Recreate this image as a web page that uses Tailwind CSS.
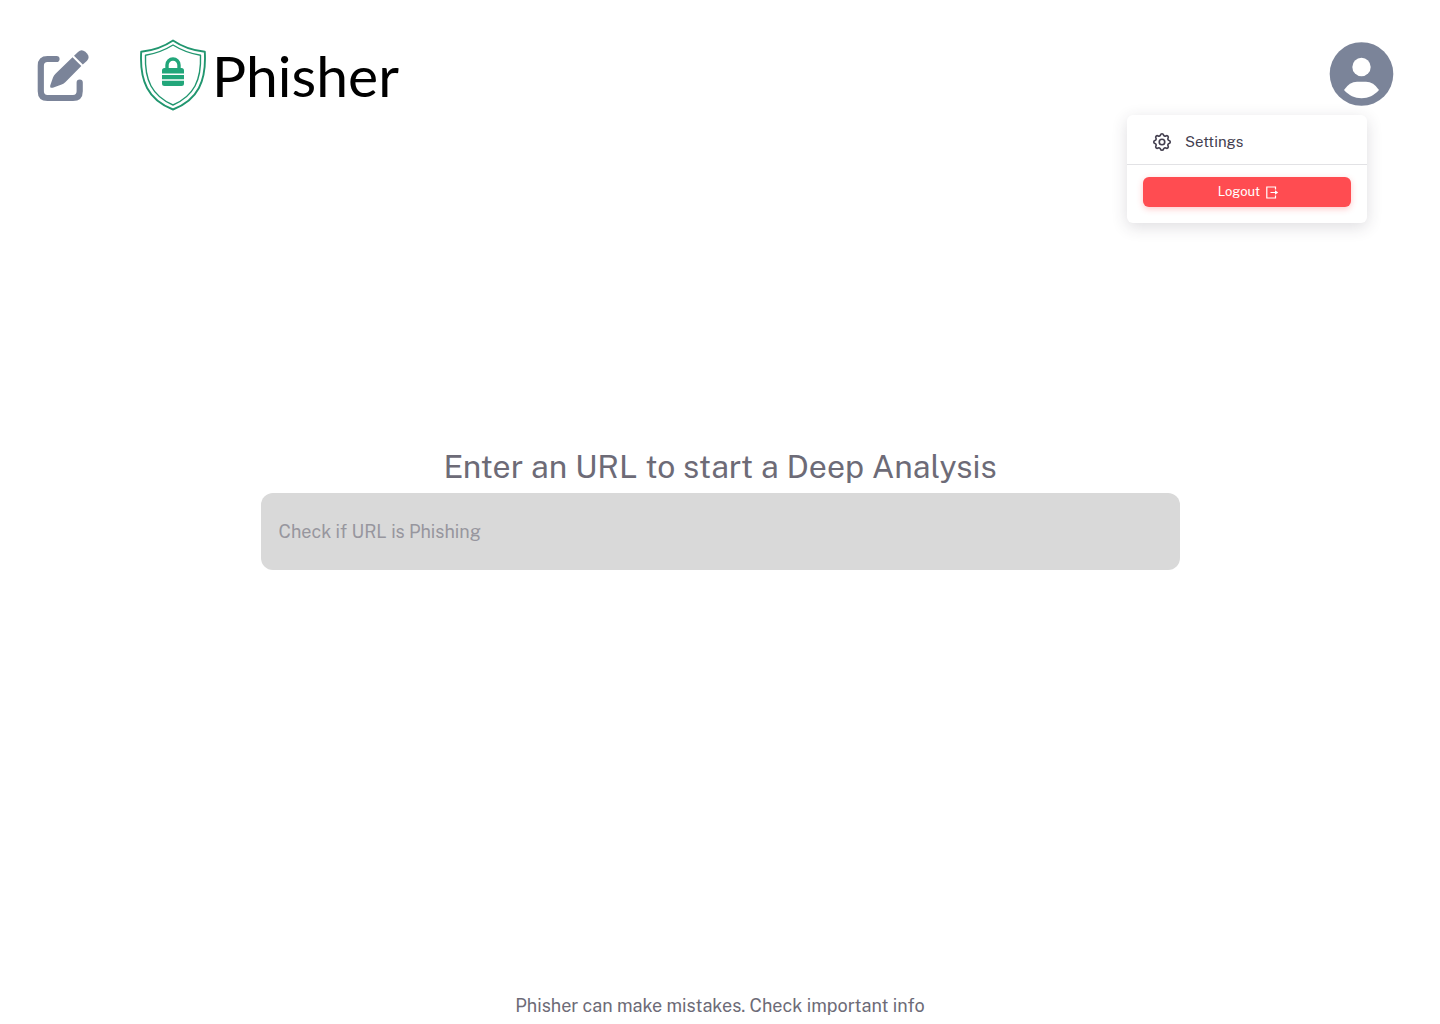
<!DOCTYPE html>
<html lang="en">
<head>
<meta charset="utf-8">
<meta name="viewport" content="width=device-width, initial-scale=1">
<title>Phisher</title>
<script src="https://cdn.jsdelivr.net/npm/@tailwindcss/browser@4"></script>
</head>
<body class="grid min-h-screen grid-rows-[1fr_auto_1fr] bg-white font-['Public_Sans','Inter',sans-serif] text-lg text-[#6d6b77]">
  <header class="relative flex items-start justify-between pt-[39px] pr-11 pl-9">
    <div class="flex items-center gap-12">
      <button type="button" aria-label="New analysis" class="text-[#7b8499]">
        <svg class="size-14" viewBox="0 0 56 56" fill="none">
          <path d="M20.500 12H11.500Q4.800 12 4.800 18.700V44.300Q4.800 51 11.500 51H37Q43.700 51 43.700 44.300V35.500" stroke="currentColor" stroke-width="6.200" stroke-linecap="round"/>
          <path d="M36.500 10.300L45.300 19L29.500 35Q27.500 37 25 37.800L16.800 40.700Q13.500 41.500 14.300 38.300L17 30.500Q17.800 28.500 19.500 26.800Z" fill="currentColor"/>
          <path d="M38 8.700L42 4.900Q45.500 1.700 49.300 4.800L51 6.500Q54.200 10.200 51 13.700L46.800 17.600Z" fill="currentColor"/>
        </svg>
      </button>
      <a href="#" class="flex items-center gap-1 text-black">
        <svg class="h-18 w-17" viewBox="0 0 68 72" fill="none">
          <path d="M33 1.500C25 7 13 11.500 1.200 12.800C-.5 42 8 61 33 70.500C58 61 66.500 42 64.800 12.800C53 11.500 41 7 33 1.500Z" stroke="#21966f" stroke-width="1.900" stroke-linejoin="round"/>
          <path d="M33 6C25 11 16 14.500 5.500 16.300C4.500 41 12 57 33 66C54 57 61.500 41 60.500 16.300C50 14.500 41 11 33 6Z" stroke="#21966f" stroke-width="1.400" stroke-linejoin="round"/>
          <path d="M27 30V26A6 6 0 0 1 39 26V30" stroke="#22a67a" stroke-width="3.400"/>
          <path d="M24.500 29H41.500Q44 29 44 31.500V34.500H22V31.500Q22 29 24.500 29ZM22 36H44V40.200H22ZM22 41.700H44V44.500Q44 47 41.500 47H24.500Q22 47 22 44.500Z" fill="#22a67a"/>
        </svg>
        <span class="font-['Lato',sans-serif] text-[57px] leading-[72px]">Phisher</span>
      </a>
    </div>
    <button type="button" aria-label="Account" aria-expanded="true" class="mt-px text-[#7b8499]">
      <svg class="size-17" viewBox="0 0 68 68">
        <circle cx="33.500" cy="34" r="31.800" fill="currentColor"/>
        <circle cx="33.500" cy="27" r="9.200" fill="#fff"/>
        <path d="M16 50Q21.500 41.800 29 41.800H38Q45.500 41.800 51 50C46 55.500 40.500 58.200 33.500 58.200S21 55.500 16 50Z" fill="#fff"/>
      </svg>
    </button>
    <nav aria-label="Account menu" class="absolute top-[115px] right-[73px] w-60 rounded-md bg-white pt-2 pb-4 shadow-[0_4px_16px_rgba(47,43,61,0.16)]">
      <a href="#" class="flex h-[41px] items-center gap-3 px-6 pb-1 text-[15px] text-[#444050]">
        <svg class="size-[22px]" viewBox="0 0 24 24" fill="none" stroke="currentColor" stroke-width="1.800" stroke-linecap="round" stroke-linejoin="round">
          <path d="M10.325 4.317c.426-1.756 2.924-1.756 3.350 0a1.724 1.724 0 0 0 2.573 1.066c1.543-.94 3.310.826 2.370 2.370a1.724 1.724 0 0 0 1.065 2.572c1.756.426 1.756 2.924 0 3.350a1.724 1.724 0 0 0-1.066 2.573c.94 1.543-.826 3.310-2.370 2.370a1.724 1.724 0 0 0-2.572 1.065c-.426 1.756-2.924 1.756-3.350 0a1.724 1.724 0 0 0-2.573-1.066c-1.543.94-3.310-.826-2.370-2.370a1.724 1.724 0 0 0-1.065-2.572c-1.756-.426-1.756-2.924 0-3.350a1.724 1.724 0 0 0 1.066-2.573c-.94-1.543.826-3.310 2.370-2.370 1 .608 2.296.07 2.572-1.065z"/>
          <circle cx="12" cy="12" r="3"/>
        </svg>
        Settings
      </a>
      <div class="border-t border-[#e2e2e5] px-4 pt-3">
        <button type="button" class="flex h-[30px] w-full items-center justify-center gap-1 rounded-md bg-[#ff4c51] pt-px pl-1 text-[13px] text-white shadow-[0_2px_6px_rgba(255,76,81,0.3)]">
          Logout
          <svg class="size-4" viewBox="0 0 16 16" fill="none" stroke="currentColor" stroke-width="1.200">
            <path d="M11.500 4.500V2H2.800V13H11.500V10.500M6.500 7.500H12"/>
            <path d="M11 5.200L14.200 7.500L11 9.800Z" fill="currentColor" stroke="none"/>
          </svg>
        </button>
      </div>
    </nav>
  </header>
  <main class="px-6 pb-[7px]">
    <form class="mx-auto flex w-full max-w-[919px] flex-col gap-[6px]">
      <label for="url" class="text-center text-[32px] leading-10">Enter an URL to start a Deep Analysis</label>
      <input id="url" type="text" placeholder="Check if URL is Phishing" class="h-[77px] w-full rounded-xl bg-[#d9d9d9] px-[18px] text-lg outline-none placeholder:text-[#97969e]">
    </form>
  </main>
  <footer class="flex items-end justify-center pb-1">Phisher can make mistakes. Check important info</footer>
</body>
</html>
